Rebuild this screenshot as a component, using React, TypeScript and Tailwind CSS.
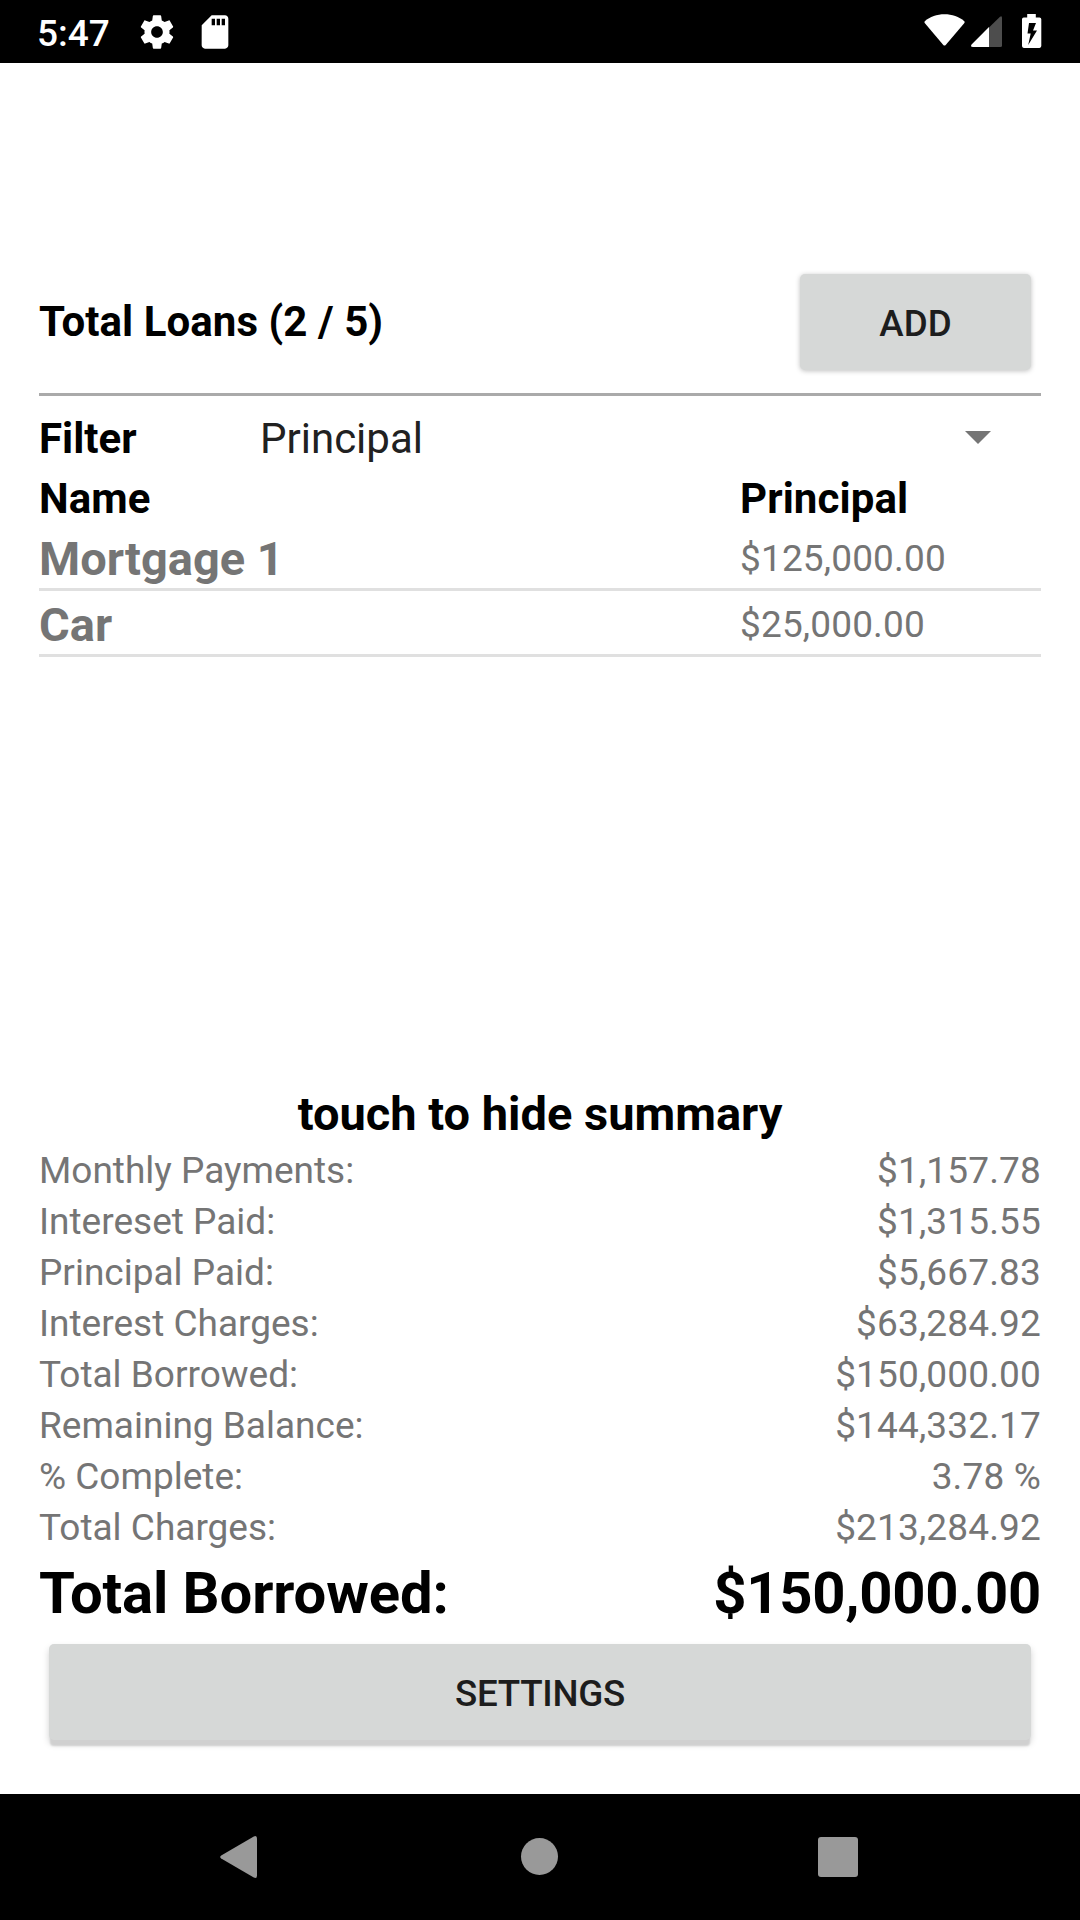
const loans = [
  { name: 'Mortgage 1', principal: '$125,000.00' },
  { name: 'Car', principal: '$25,000.00' },
];

const summary = [
  { label: 'Monthly Payments:', value: '$1,157.78' },
  { label: 'Intereset Paid:', value: '$1,315.55' },
  { label: 'Principal Paid:', value: '$5,667.83' },
  { label: 'Interest Charges:', value: '$63,284.92' },
  { label: 'Total Borrowed:', value: '$150,000.00' },
  { label: 'Remaining Balance:', value: '$144,332.17' },
  { label: '% Complete:', value: '3.78 %' },
  { label: 'Total Charges:', value: '$213,284.92' },
];

function StatusBar() {
  return (
    <div className="h-[63px] shrink-0 bg-black text-white flex items-center justify-between px-[38px]">
      <div className="flex items-center">
        <span className="w-[99px] -ml-px mr-px pt-[5px] text-[37px] leading-[60px] font-medium">5:47</span>
        <svg viewBox="0 0 24 24" className="size-[40px] mr-[18px]" fill="currentColor">
          <path d="M19.43 12.98c.04-.32.07-.64.07-.98s-.03-.66-.07-.98l2.11-1.65c.19-.15.24-.42.12-.64l-2-3.46c-.12-.22-.39-.3-.61-.22l-2.49 1c-.52-.4-1.08-.73-1.69-.98l-.38-2.65C14.46 2.18 14.25 2 14 2h-4c-.25 0-.46.18-.49.42l-.38 2.65c-.61.25-1.17.59-1.69.98l-2.49-1c-.23-.09-.49 0-.61.22l-2 3.46c-.13.22-.07.49.12.64l2.11 1.65c-.04.32-.07.65-.07.98s.03.66.07.98l-2.11 1.65c-.19.15-.24.42-.12.64l2 3.46c.12.22.39.3.61.22l2.49-1c.52.4 1.08.73 1.69.98l.38 2.65c.03.24.24.42.49.42h4c.25 0 .46-.18.49-.42l.38-2.65c.61-.25 1.17-.59 1.69-.98l2.49 1c.23.09.49 0 .61-.22l2-3.46c.12-.22.07-.49-.12-.64l-2.11-1.65zM12 15.5c-1.93 0-3.5-1.57-3.5-3.5s1.57-3.5 3.5-3.5 3.5 1.57 3.5 3.5-1.57 3.5-3.5 3.5z" />
        </svg>
        <svg viewBox="0 0 24 24" className="size-[40px]" fill="currentColor">
          <path d="M18 2h-8L4.02 8 4 20c0 1.1.9 2 2 2h12c1.1 0 2-.9 2-2V4c0-1.1-.9-2-2-2zm-6 6h-2V4h2v4zm3 0h-2V4h2v4zm3 0h-2V4h2v4z" />
        </svg>
      </div>
      <svg viewBox="924 0 118 63" className="w-[118px] h-[63px]" fill="currentColor">
        <path d="M924.8 21.2C930 16.5 937 14.2 944.5 14.2S959 16.5 964.3 21.2Q965 22 964.4 22.9L945.7 45Q944.5 46.2 943.3 45L924.7 22.9Q924 22 924.8 21.2Z" />
        <path d="M1002 18Q1002 15 1000 16.8L989 27.5V47H1000.5Q1002 47 1002 45.5Z" className="fill-[#4d4d4d]" />
        <path d="M989 27L971.6 44.5Q970 47 973 47H989Z" />
        <path
          fillRule="evenodd"
          d="M1027.2 14h8.6v3.5h3.7q1.8 0 1.8 1.8v26.8q0 1.8-1.8 1.8h-15.7q-1.8 0-1.8-1.8V19.3q0-1.8 1.8-1.8h3.4zM1029 23l-1.5 10.5h3.2L1028.2 45l8.8-14.500h-4L1036 23z"
        />
      </svg>
    </div>
  );
}

function NavBar() {
  return (
    <div className="h-[126px] shrink-0 bg-black text-[#999999] flex items-center justify-between pl-[220px] pr-[222px]">
      <svg viewBox="0 0 37 42" className="w-[37px] h-[42px]" fill="currentColor">
        <path d="M1.2 19.4L33.8.5Q37 -1 37 2.6V39.4Q37 43 33.8 41.5L1.2 22.6Q-.8 21 1.2 19.4Z" />
      </svg>
      <div className="size-[37px] ml-[4px] -mt-px rounded-full bg-current" />
      <div className="size-[40px] rounded-[3px] bg-current" />
    </div>
  );
}

export default function App() {
  return (
    <div className="w-[1080px] h-[1920px] flex flex-col bg-white text-black font-['Roboto',sans-serif]">
      <StatusBar />
      <main className="flex-1 flex flex-col px-[39px] pt-[211px]">
        <div className="h-[119px] shrink-0 flex items-start justify-between pr-[10px]">
          <h1 className="text-[42px] leading-[96px] tracking-[0.06px] font-bold">Total Loans (2 / 5)</h1>
          <button className="w-[231px] h-[96px] pt-[3px] rounded-[5px] bg-[#d6d8d7] text-[#1d1d1d] text-[36.75px] font-medium shadow-[0_1px_5px_rgba(0,0,0,0.25)]">
            ADD
          </button>
        </div>
        <div className="h-[3px] shrink-0 bg-[#aaaaaa]" />
        <div className="h-[73px] shrink-0 pt-[13px] flex text-[42px] leading-[60px]">
          <span className="w-[221px] font-bold">Filter</span>
          <span className="flex-1 text-[#212121]">Principal</span>
          <svg viewBox="0 0 26 13" className="w-[26px] h-[13px] mt-[22px] mr-[50px] fill-[#757575]">
            <path d="M0 0h26L13 13z" />
          </svg>
        </div>
        <div className="h-[56px] shrink-0 pt-[3px] flex text-[42px] leading-[54px] tracking-[0.1px] font-bold">
          <span className="w-[701px]">Name</span>
          <span>Principal</span>
        </div>
        {loans.map((loan) => (
          <div key={loan.name} className="h-[66px] shrink-0 flex border-b-[3px] border-[#e0e0e0] text-[#757575]">
            <span className="w-[701px] pt-[3px] text-[47px] leading-[62px] font-bold">{loan.name}</span>
            <span className="text-[37px] leading-[67px] tracking-[0.15px]">{loan.principal}</span>
          </div>
        ))}

        <div className="mt-auto pb-[54px]">
          <p className="h-[59px] text-center text-[47px] leading-[56px] font-bold">touch to hide summary</p>
          {summary.map((row) => (
            <div key={row.label} className="flex justify-between text-[37px] leading-[51px] text-[#757575]">
              <span>{row.label}</span>
              <span className="tracking-[0.15px]">{row.value}</span>
            </div>
          ))}
          <div className="h-[80px] flex justify-between text-[58px] leading-[81px] tracking-[-0.1px] font-bold">
            <span>Total Borrowed:</span>
            <span className="tracking-[-0.25px]">$150,000.00</span>
          </div>
          <div className="px-[10px] pt-[11px]">
            <button className="block w-full h-[96px] pt-[3px] rounded-[5px] bg-[#d6d8d7] text-[#1d1d1d] text-[36.75px] tracking-[-0.25px] font-medium shadow-[0_7px_2px_-1px_#d0d0d0,0_4px_7px_rgba(0,0,0,0.18)]">
              SETTINGS
            </button>
          </div>
        </div>
      </main>
      <NavBar />
    </div>
  );
}
